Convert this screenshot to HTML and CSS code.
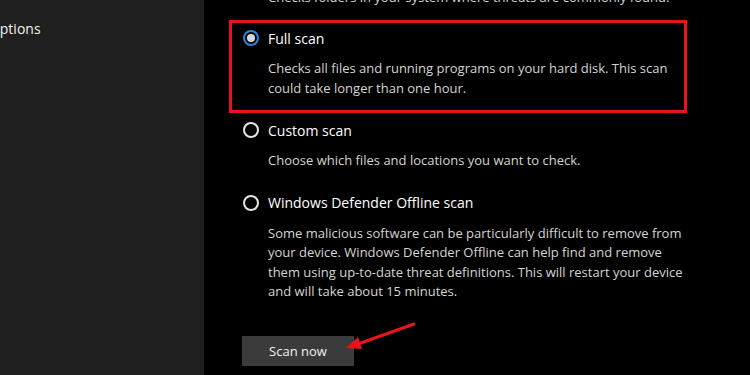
FILE: index.html
```html
<!DOCTYPE html>
<html lang="en">
<head>
  <meta charset="UTF-8">
  <title>Scan options</title>
  <meta name="viewport" content="width=device-width, initial-scale=1.0">
  <link rel="stylesheet" href="styles.css">
</head>
<body>
  <nav class="sidebar">
    <div class="nav-item">Scan options</div>
  </nav>
  <main class="content">
    <p class="intro">Checks folders in your system where threats are commonly found.</p>

    <div class="option highlight">
      <div class="option-row">
        <span class="radio checked"></span>
        <span class="label">Full scan</span>
      </div>
      <p class="desc">Checks all files and running programs on your hard disk. This scan could take longer than one hour.</p>
    </div>

    <div class="option">
      <div class="option-row">
        <span class="radio"></span>
        <span class="label">Custom scan</span>
      </div>
      <p class="desc">Choose which files and locations you want to check.</p>
    </div>

    <div class="option">
      <div class="option-row">
        <span class="radio"></span>
        <span class="label">Windows Defender Offline scan</span>
      </div>
      <p class="desc">Some malicious software can be particularly difficult to remove from your device. Windows Defender Offline can help find and remove them using up-to-date threat definitions. This will restart your device and will take about 15 minutes.</p>
    </div>

    <div class="actions">
      <button class="scan-btn">Scan now</button>
      <!-- annotation arrow -->
      <svg class="arrow" width="74" height="32" viewBox="0 0 74 32">
        <line x1="70" y1="3" x2="14" y2="23" stroke="#e8141c" stroke-width="3" stroke-linecap="round"/>
        <polygon points="2,27 14,16 18,28" fill="#e8141c"/>
      </svg>
    </div>
  </main>
</body>
</html>
```

FILE: styles.css
```css
body { margin: 0; background: #000; color: #fff; font-family: "Open Sans", "Noto Sans", sans-serif; display: flex; height: 375px; overflow: hidden; }
.sidebar { width: 204px; background: #1f1f1f; flex-shrink: 0; overflow: hidden; }
.nav-item { font-size: 14px; line-height: 20px; margin: 19px 0 0 -43px; white-space: nowrap; color: #f2f2f2; }
.content { padding-left: 25px; flex: 1; }
.intro { margin: -12px 0 0 39px; font-size: 13px; line-height: 19.5px; color: #d4d4d4; white-space: nowrap; }
p { margin: 0; }
/* Options */
.option { width: 458px; box-sizing: border-box; border: 3px solid transparent; padding: 5px 11px 12px; margin-top: -1px; }
.option.highlight { border-color: #e8141c; margin-top: 12.5px; }
.option-row { display: flex; align-items: center; gap: 9px; height: 20px; }
.radio { width: 16px; height: 16px; box-sizing: border-box; border: 2px solid #e6e6e6; border-radius: 50%; display: flex; align-items: center; justify-content: center; }
.radio.checked { border-color: #2b84d9; }
.radio.checked::after { content: ""; width: 8px; height: 8px; border-radius: 50%; background: #d8d8d8; }
.label { font-size: 14px; color: #fff; }
.desc { margin: 11px -40px 0 25px; font-size: 13px; line-height: 19.5px; color: #d4d4d4; max-width: 428px; }
/* Button */
.actions { position: relative; margin: 19.5px 0 0 13px; }
.scan-btn { width: 112px; height: 30px; background: #3b3b3b; color: #f2f2f2; border: none; font-family: inherit; font-size: 13px; padding: 0; }
.arrow { position: absolute; left: 102px; top: -15px; }
```
